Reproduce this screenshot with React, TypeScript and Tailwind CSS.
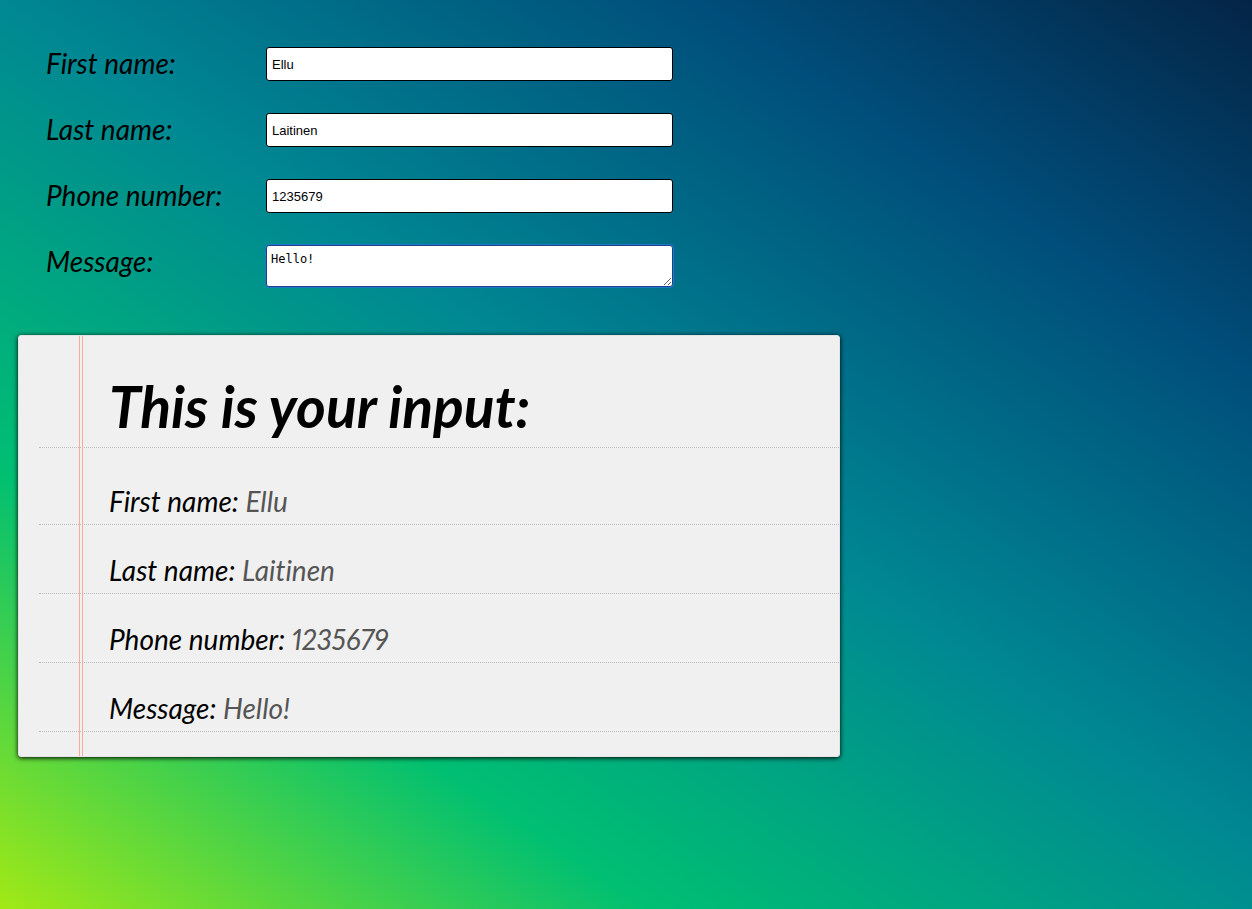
import { useState } from "react";

type Field = { id: string; label: string; value: string };

const initial: Field[] = [
  { id: "firstname", label: "First name:", value: "Ellu" },
  { id: "lastname", label: "Last name:", value: "Laitinen" },
  { id: "phone", label: "Phone number:", value: "1235679" },
  { id: "message", label: "Message:", value: "Hello!" },
];

export default function App() {
  const [fields, setFields] = useState(initial);
  const update = (id: string, value: string) =>
    setFields((all) => all.map((f) => (f.id === id ? { ...f, value } : f)));

  return (
    <div className="min-h-screen bg-[linear-gradient(214deg,#051937_-6%,#004d7a_21%,#008793_48%,#00bf72_75%,#a8eb12_101%)] px-[18px] pt-[31px] pb-8 font-['Lato','Noto_Sans',sans-serif] text-[28px] leading-8 text-black [font-variant-ligatures:none]">
      <form className="max-w-[655px] pl-7" onSubmit={(e) => e.preventDefault()}>
        {fields.map((f) => (
          <div key={f.id} className="flex items-start py-4">
            <label htmlFor={f.id} className="w-[220px] shrink-0 italic">
              {f.label}
            </label>
            {f.id === "message" ? (
              <textarea
                id={f.id}
                value={f.value}
                onChange={(e) => update(f.id, e.target.value)}
                className="block h-[42px] min-w-0 flex-1 rounded-[3px] border border-[#1d4288] bg-white px-1 py-[6px] font-['DejaVu_Sans_Mono',monospace] text-[12px] leading-[15px] outline-1 outline-[#1c78c8]"
              />
            ) : (
              <input
                id={f.id}
                type="text"
                value={f.value}
                onChange={(e) => update(f.id, e.target.value)}
                className="h-[34px] min-w-0 flex-1 rounded-[3px] border border-black bg-white px-[5px] font-['Liberation_Sans',sans-serif] text-[13px] leading-4 outline-none"
              />
            )}
          </div>
        ))}
      </form>

      <section className="relative mt-8 max-w-[822px] rounded-[3px] border border-[#e3e3e3] bg-[#f0f0f0] pb-6 pl-5 shadow-[0_1px_5px_#000]">
        <div className="absolute inset-y-0 left-[60px] w-1 border-x border-[#ffa99e]" />
        <h1 className="border-b border-dotted border-[#bcbcbc] pt-9 pb-[7px] pl-[70px] text-[57px] leading-[68px] font-bold italic">
          This is your input:
        </h1>
        <div className="pt-2">
          {fields.map((f) => (
            <p
              key={f.id}
              className="border-b border-dotted border-[#bcbcbc] pt-[29px] pb-[7px] pl-[70px] italic"
            >
              {f.label} <span className="text-[#555] proportional-nums">{f.value}</span>
            </p>
          ))}
        </div>
      </section>
    </div>
  );
}
